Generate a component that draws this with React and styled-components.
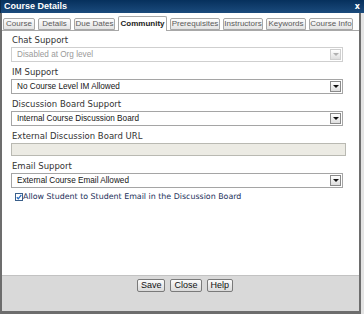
import React from 'react';
import styled, { createGlobalStyle } from 'styled-components';

const Global = createGlobalStyle`
  html, body { margin: 0; padding: 0; background: #e4e4e4; }
  body { width: 364px; height: 314px; overflow: hidden; font-family: "Liberation Sans", Arial, sans-serif; }
  * { box-sizing: border-box; }
`;

const Window = styled.div`
  width: 364px;
  height: 314px;
  display: flex;
  flex-direction: column;
`;

const TitleBar = styled.div`
  flex: none;
  height: 13px;
  background: linear-gradient(#06305c, #1b4b7d);
  border-left: 1px solid #0a2848;
  display: flex;
  align-items: center;
  justify-content: space-between;
  padding: 0 4px 0 3px;
  color: #fff;
  font-weight: bold;
  font-size: 9px;
  line-height: 13px;
`;

const CloseX = styled.span`
  font-family: "DejaVu Sans", sans-serif;
  font-size: 8px;
  font-weight: bold;
`;

const Frame = styled.div`
  flex: 1;
  width: 361px;
  display: flex;
  flex-direction: column;
  border-left: 2px solid #6d6d6d;
  border-right: 2px solid #6d6d6d;
  border-bottom: 3px solid #6d6d6d;
`;

const TabStrip = styled.div`
  flex: none;
  height: 18px;
  display: flex;
  align-items: flex-end;
  gap: 3px;
  padding-left: 1px;
  background: #fff;
  border-bottom: 1px solid #a8a8a8;
`;

const Tab = styled.div`
  width: ${p => p.$w}px;
  height: ${p => (p.$active ? 15 : 12)}px;
  margin-bottom: ${p => (p.$active ? -1 : 0)}px;
  border: 1px solid #a8a8a8;
  border-bottom: ${p => (p.$active ? 'none' : '1px solid #a8a8a8')};
  border-radius: 2px 2px 0 0;
  background: ${p => (p.$active ? '#fff' : 'linear-gradient(#fdfdfd, #e3e3e3)')};
  color: ${p => (p.$active ? '#222' : '#5a5a5a')};
  font-weight: ${p => (p.$active ? 'bold' : 'normal')};
  font-size: 8px;
  line-height: ${p => (p.$active ? 14 : 10)}px;
  text-align: center;
  white-space: nowrap;
  position: relative;
`;

const Content = styled.div`
  flex: 1;
  background: #fff;
  padding: 3px 16px 0 9px;
  display: flex;
  flex-direction: column;
`;

const Field = styled.div`
  display: flex;
  flex-direction: column;
  margin-bottom: 4px;
`;

const Label = styled.div`
  font-family: "DejaVu Sans", sans-serif;
  font-size: 8.5px;
  line-height: 13px;
  color: #333;
  padding-left: 1px;
`;

const SelectBox = styled.div`
  height: 15px;
  border: 1px solid ${p => (p.$disabled ? '#cfcfcf' : '#a5a5a5')};
  background: #fff;
  display: flex;
  align-items: stretch;
  color: ${p => (p.$disabled ? '#9a9a9a' : '#151515')};
  font-size: 8.2px;
`;

const SelectText = styled.span`
  flex: 1;
  padding-left: 5px;
  line-height: 13px;
  white-space: nowrap;
`;

const ArrowBtn = styled.span`
  width: 11px;
  margin: 1px;
  border: 1px solid ${p => (p.$disabled ? '#cfcfcf' : '#8a8a8a')};
  background: linear-gradient(#ffffff, #dedede);
  display: flex;
  align-items: center;
  justify-content: center;
  &::after {
    content: '';
    border-left: 3px solid transparent;
    border-right: 3px solid transparent;
    border-top: 3px solid ${p => (p.$disabled ? '#b0b0b0' : '#111')};
  }
`;

const TextInput = styled.div`
  height: 13px;
  margin-right: -3px;
  border: 1px solid #b9b9b2;
  background: #ecebe4;
`;

const CheckRow = styled.label`
  display: flex;
  align-items: center;
  margin: -1px 0 0 4px;
  height: 11px;
  font-family: "DejaVu Sans", sans-serif;
  font-size: 7.9px;
  color: #22305a;
`;

const Footer = styled.div`
  flex: none;
  height: 36px;
  background: #d9d9d9;
  border-top: 1px solid #c2c2c2;
  display: flex;
  justify-content: center;
  align-items: flex-start;
  gap: 5px;
  padding: 3px 0 0 9px;
`;

const Button = styled.button`
  height: 13px;
  padding: 0 3px;
  border: 1px solid #7a7a7a;
  border-radius: 2px;
  background: linear-gradient(#fbfbfb, #dadada);
  font-family: "Liberation Sans", Arial, sans-serif;
  font-size: 9px;
  line-height: 11px;
  color: #111;
`;

const Check = () => (
  <svg width="8" height="8" viewBox="0 0 8 8">
    <rect x="0.5" y="0.5" width="7" height="7" fill="#fff" stroke="#3a5f8a" />
    <path d="M1.8 4.2 L3.3 5.8 L6.3 1.8" fill="none" stroke="#2a6cc0" strokeWidth="1.3" />
  </svg>
);

const Select = ({ value, disabled }) => (
  <SelectBox $disabled={disabled}>
    <SelectText>{value}</SelectText>
    <ArrowBtn $disabled={disabled} />
  </SelectBox>
);

const tabs = [
  ['Course', 32],
  ['Details', 33],
  ['Due Dates', 41],
  ['Community', 49],
  ['Prerequisites', 50],
  ['Instructors', 40],
  ['Keywords', 40],
  ['Course Info', 44],
];

export default function App() {
  return (
    <>
      <Global />
      <Window>
        <TitleBar>
          <span>Course Details</span>
          <CloseX>x</CloseX>
        </TitleBar>
        <Frame>
          <TabStrip>
            {tabs.map(([t, w]) => (
              <Tab key={t} $w={w} $active={t === 'Community'}>{t}</Tab>
            ))}
          </TabStrip>
          <Content>
            <Field>
              <Label>Chat Support</Label>
              <Select value="Disabled at Org level" disabled />
            </Field>
            <Field>
              <Label>IM Support</Label>
              <Select value="No Course Level IM Allowed" />
            </Field>
            <Field>
              <Label>Discussion Board Support</Label>
              <Select value="Internal Course Discussion Board" />
            </Field>
            <Field>
              <Label>External Discussion Board URL</Label>
              <TextInput />
            </Field>
            <Field>
              <Label>Email Support</Label>
              <Select value="External Course Email Allowed" />
            </Field>
            <CheckRow>
              <Check />
              <span>Allow Student to Student Email in the Discussion Board</span>
            </CheckRow>
          </Content>
          <Footer>
            <Button>Save</Button>
            <Button>Close</Button>
            <Button>Help</Button>
          </Footer>
        </Frame>
      </Window>
    </>
  );
}
